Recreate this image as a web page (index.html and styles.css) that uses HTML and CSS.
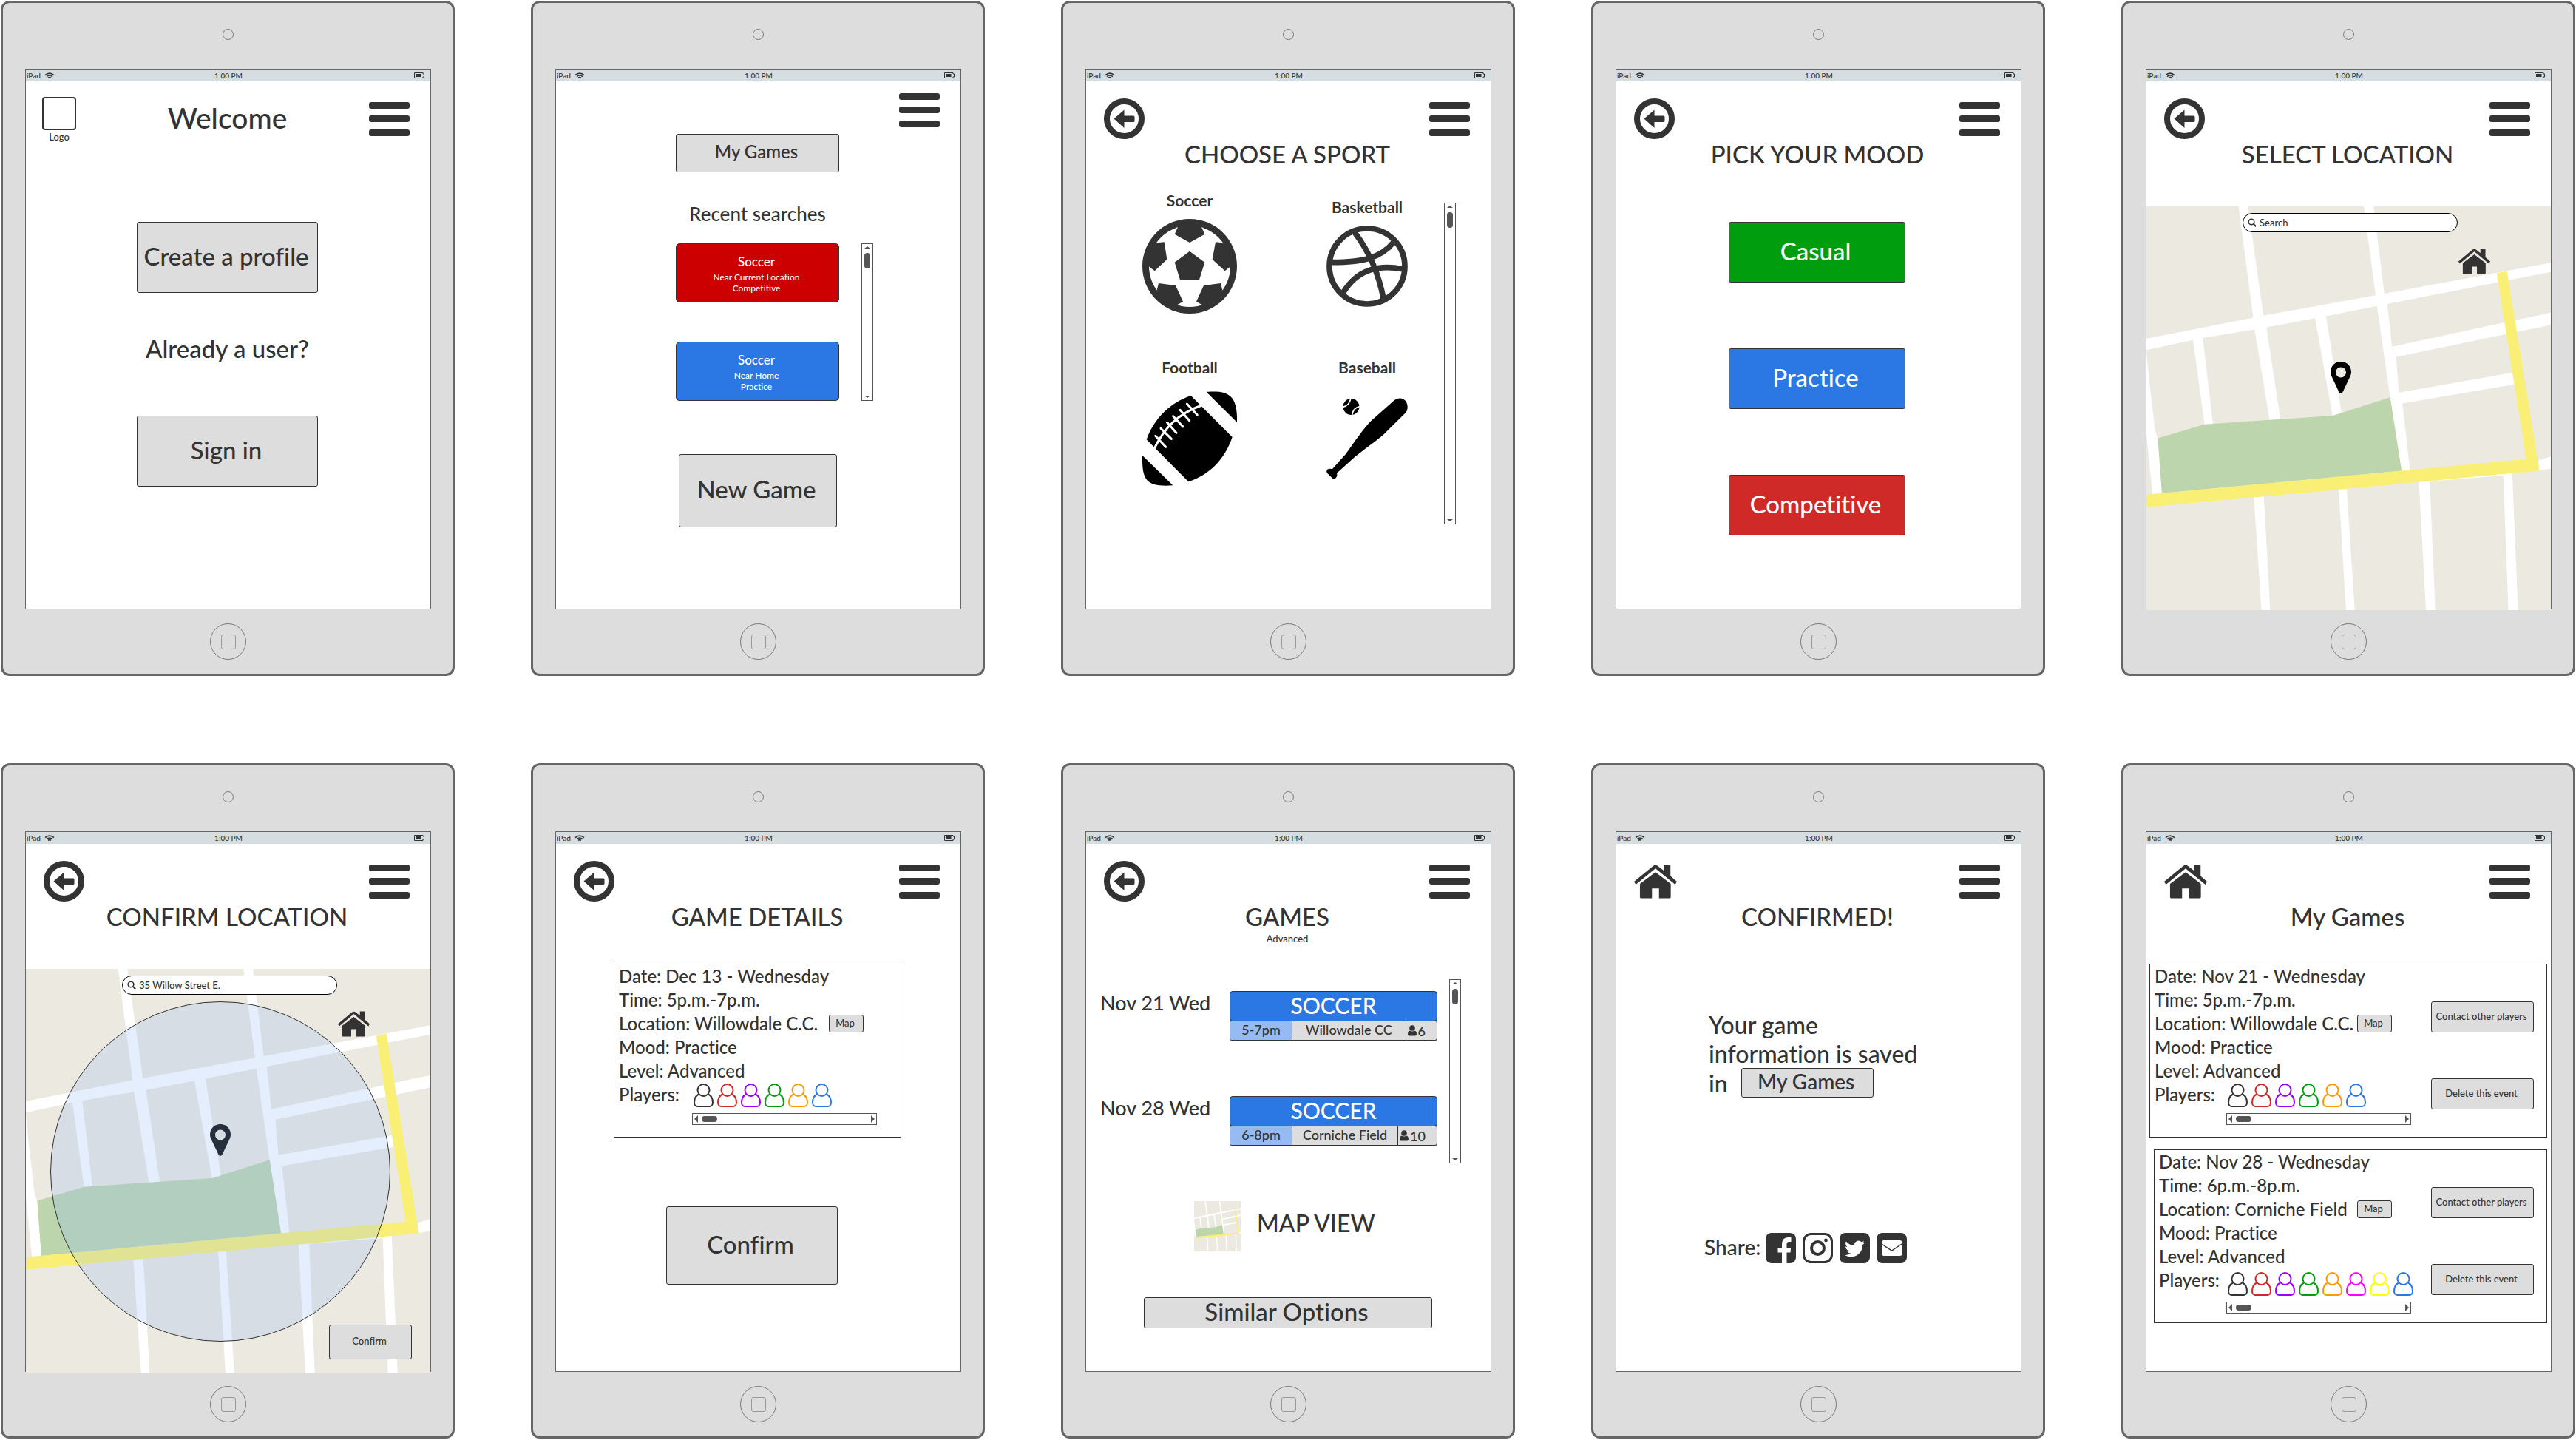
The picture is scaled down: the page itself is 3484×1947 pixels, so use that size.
FILE: index.html
```html
<!DOCTYPE html>
<html lang="en">
<head>
<meta charset="utf-8">
<meta name="viewport" content="width=device-width, initial-scale=1">
<title>Pick-up games: tablet wireframes</title>
<link rel="stylesheet" href="styles.css">
</head>
<body>
<svg class="defs" width="0" height="0" aria-hidden="true">
  <symbol id="wifi" viewBox="0 0 14 9"><path d="M1 3.6Q7-1.4 13 3.6M3 5.6Q7 2.4 11 5.6M5 7.4Q7 5.8 9 7.4" fill="none" stroke="#333" stroke-width="1.6"/></symbol>
  <symbol id="battery" viewBox="0 0 14 8"><path d="M.5.5h11.500v1.500h1.500v4h-1.500v1.500H.5z" fill="none" stroke="#333"/><path d="M2 2h7.500v4H2z" fill="#333"/></symbol>
  <symbol id="menu" viewBox="0 0 55 46"><rect width="55" height="9" rx="3"/><rect y="18" width="55" height="9" rx="3"/><rect y="37" width="55" height="9" rx="3"/></symbol>
  <symbol id="back" viewBox="0 0 55 55"><circle cx="27.500" cy="27.500" r="23.500" fill="none" stroke="currentColor" stroke-width="8"/><path d="M13.500 27.500 27.500 15.500v8H40q1.500 0 1.500 1.500v5.500q0 1.500-1.500 1.500H27.500v8z"/></symbol>
  <symbol id="home" viewBox="149 241 146 80" preserveAspectRatio="none"><path d="M149 281 213 245Q222 240 231 245L250 255V242H273V268L295 281 289 288 222 250 155 288Z"/><path d="M222 259 274 286V317Q274 320 271 320H234V297H210V320H172Q169 320 169 317V286Z"/></symbol>
  <symbol id="person" viewBox="0 0 27 32"><g fill="none" stroke="currentColor" stroke-width="2"><circle cx="13.500" cy="9" r="8"/><path d="M7 14.500C3 16.500 1 21 1 26c0 3 2 5 4.500 5h16c2.500 0 4.500-2 4.500-5 0-5-2-9.500-6-11.500"/></g></symbol>
  <symbol id="user" viewBox="0 0 12 15"><circle cx="6" cy="4" r="3.800"/><path d="M3 7.500Q6 9.500 9 7.500 12 8 12 12.500 12 14.500 10 14.500H2Q0 14.500 0 12.500 0 8 3 7.500Z"/></symbol>
  <symbol id="glass" viewBox="0 0 12 12"><circle cx="5" cy="5" r="3.800" fill="none" stroke="#333" stroke-width="1.600"/><path d="m7.800 7.800 3.400 3.400" stroke="#333" stroke-width="2"/></symbol>
  <symbol id="pin" viewBox="0 0 28 43"><path fill-rule="evenodd" d="M14 0C22 0 28 6 28 14c0 3-1 5-2.200 7.500L16.800 40.500q-2.800 5-5.600 0L2.200 21.500C1 19 0 17 0 14 0 6 6 0 14 0Zm0 7.500a7 7 0 1 0 0 14 7 7 0 0 0 0-14Z"/></symbol>
  <symbol id="soccer" viewBox="75 138 384 384"><circle cx="267" cy="330" r="192"/><circle cx="267" cy="330" r="165" fill="#fff"/><path d="M267 269 328 314 306 385H228L206 314ZM218 173 206 200 267 234 328 200 316 173 300 150H235ZM133 235 164 232 175 302 125 349 103 332 85 280ZM401 235 372 232 359 302 410 349 431 332 450 280ZM134 427 141 399 210 408 240 473 216 487 160 480ZM400 427 393 399 324 408 294 473 318 487 374 480Z"/></symbol>
  <symbol id="basketball" viewBox="822 165 330 330"><g fill="none" stroke="currentColor" stroke-width="23"><circle cx="987" cy="330" r="153"/><path d="M938 195Q1025 310 1054 465M846 314C960 314 1040 300 1095 232M888 440C950 335 1040 325 1132 341"/></g></symbol>
  <symbol id="football" viewBox="75 839 384 384"><path d="M272 857 440 1025C410 1115 345 1180 262 1206L92 1035C125 945 190 885 272 857ZM335 842C425 835 462 855 459 965ZM75 1099C73 1200 90 1228 199 1221Z"/><path d="M122 1074C165 985 220 930 316 896M128 1020 170 1065M150 990 193 1032M175 965 213 1008M200 940 240 983M228 915 266 958M256 890 298 935" fill="none" stroke="#fff" stroke-width="9" stroke-linecap="round"/></symbol>
  <symbol id="baseball" viewBox="825 869 322 322"><path d="M1092 880C1108 866 1130 868 1140 884 1148 897 1148 915 1140 926L1055 1010C1030 1035 985 1062 935 1105L866 1167C870 1180 862 1190 852 1190L828 1167C820 1152 835 1146 848 1151L900 1093C935 1045 975 985 1005 957Z"/><circle cx="923" cy="904" r="32"/><path d="M890 905Q916 900 921 871M957 903Q930 908 926 938" fill="none" stroke="#fff" stroke-width="5"/></symbol>
  <symbol id="facebook" viewBox="0 0 41 41"><rect width="41" height="41" rx="8"/><path fill="#fff" d="M22 41V26.500H16.500V21H22V16C22 9.500 25 6 30.500 6H34.500V12H31.500Q28.500 12 28.500 15V21H34L33.500 26.500H28.500V41Z"/></symbol>
  <symbol id="instagram" viewBox="0 0 41 41"><rect x="1.500" y="1.500" width="38" height="38" rx="10" fill="none" stroke="currentColor" stroke-width="3"/><circle cx="20.500" cy="20.500" r="8.500" fill="none" stroke="currentColor" stroke-width="4"/><circle cx="31.500" cy="10" r="2.400"/></symbol>
  <symbol id="twitter" viewBox="0 0 41 41"><rect width="41" height="41" rx="8"/><path fill="#fff" transform="translate(7 8) scale(1.12)" d="M23.953 4.570a10 10 0 01-2.825.775 4.958 4.958 0 002.163-2.723c-.951.555-2.005.959-3.127 1.184a4.920 4.920 0 00-8.384 4.482C7.690 8.095 4.067 6.130 1.640 3.162a4.822 4.822 0 00-.666 2.475c0 1.710.870 3.213 2.188 4.096a4.904 4.904 0 01-2.228-.616v.060a4.923 4.923 0 003.946 4.827 4.996 4.996 0 01-2.212.085 4.936 4.936 0 004.604 3.417 9.867 9.867 0 01-6.102 2.105c-.390 0-.779-.023-1.170-.067a13.995 13.995 0 007.557 2.209c9.053 0 13.998-7.496 13.998-13.985 0-.210 0-.420-.015-.630A9.935 9.935 0 0024 4.590z"/></symbol>
  <symbol id="email" viewBox="0 0 41 41"><rect width="41" height="41" rx="8"/><rect x="7" y="10" width="27.500" height="21" rx="3" fill="#fff"/><path d="M7 15 20.500 24 34 15" fill="none" stroke="currentColor" stroke-width="1.500"/></symbol>
  <symbol id="streets" viewBox="98 476 1382 930" preserveAspectRatio="none">
    <rect x="98" y="476" width="1382" height="930" fill="#ece9e1"/>
    <g fill="#fff">
      <path d="M98 781 480 730 895 679 1480 606V627L1335 646 1298 651 921 701 711 729 508 755 290 779 98 807Z"/>
      <path d="M413 476H445L498 728 508 754 556 967 519 969 467 757 463 733Z"/>
      <path d="M841 476H874L911 678 921 701 937 799 951 823 961 905 973 930 999 1086H970L931 918 886 707 881 681Z"/>
      <path d="M257 783 290 776 326 980H297ZM673 730 711 725 765 955 735 962Z"/>
      <path d="M937 799 1480 721V749L951 823ZM961 905 1349 859 1355 886 973 930Z"/>
      <path d="M98 812 108 880 127 990 137 1012 151 1138 119 1142 98 1000ZM1436 1061 1480 1052V1080L1441 1084Z"/>
      <path d="M1030 1108 1317 1090V1096L1066 1109Z"/>
      <path d="M465 1144 499 1142 521 1406H491ZM755 1127 782 1125 810 1406H780ZM1029 1109 1066 1107 1085 1406H1053ZM1317 1092 1348 1089 1368 1406H1335Z"/>
    </g>
    <path fill="#bdd5ac" d="M137 1010 297 978 735 958 931 916 970 1085 151 1137Z"/>
    <path fill="#faef75" d="M98 1140 970 1085 1396 1058 1295 630 1330 625 1441 1085 98 1169Z"/>
  </symbol>
</svg>

<main class="board">

  <article class="tablet">
    <div class="tablet__top"><span class="camera"></span></div>
    <section class="screen">
      <div class="status"><span class="status__net">iPad <svg class="i-wifi"><use href="#wifi"/></svg></span><span>1:00 PM</span><svg class="i-battery"><use href="#battery"/></svg></div>
      <header class="hero">
        <div class="logo"><span class="logo__box"></span>Logo</div>
        <h1 class="hero__title">Welcome</h1>
        <button class="icon-btn" aria-label="Menu"><svg class="i-menu"><use href="#menu"/></svg></button>
      </header>
      <div class="signup">
        <button class="btn btn--tall">Create a profile</button>
        <p class="signup__hint">Already a user?</p>
        <button class="btn btn--tall">Sign in</button>
      </div>
    </section>
    <div class="tablet__foot"><span class="home-key"></span></div>
  </article>

  <article class="tablet">
    <div class="tablet__top"><span class="camera"></span></div>
    <section class="screen">
      <div class="status"><span class="status__net">iPad <svg class="i-wifi"><use href="#wifi"/></svg></span><span>1:00 PM</span><svg class="i-battery"><use href="#battery"/></svg></div>
      <header class="top top--high"><button class="icon-btn" aria-label="Menu"><svg class="i-menu"><use href="#menu"/></svg></button></header>
      <div class="searches">
        <button class="btn btn--my">My Games</button>
        <h2 class="searches__title">Recent searches</h2>
        <div class="recent">
          <div class="recent__list">
            <button class="recent__item is-crimson"><b>Soccer</b>Near Current Location<br>Competitive</button>
            <button class="recent__item is-blue"><b>Soccer</b>Near Home<br>Practice</button>
          </div>
          <div class="vscroll"><span class="vscroll__thumb"></span></div>
        </div>
        <button class="btn btn--new">New Game</button>
      </div>
    </section>
    <div class="tablet__foot"><span class="home-key"></span></div>
  </article>

  <article class="tablet">
    <div class="tablet__top"><span class="camera"></span></div>
    <section class="screen">
      <div class="status"><span class="status__net">iPad <svg class="i-wifi"><use href="#wifi"/></svg></span><span>1:00 PM</span><svg class="i-battery"><use href="#battery"/></svg></div>
      <header class="top"><button class="icon-btn" aria-label="Back"><svg class="i-back"><use href="#back"/></svg></button><button class="icon-btn" aria-label="Menu"><svg class="i-menu"><use href="#menu"/></svg></button></header>
      <h1 class="title">CHOOSE A SPORT</h1>
      <div class="sports">
        <div class="sports__grid">
          <button class="sport">Soccer<svg class="i-sport"><use href="#soccer"/></svg></button>
          <button class="sport">Basketball<svg class="i-sport i-sport--small"><use href="#basketball"/></svg></button>
          <button class="sport sport--photo">Football<svg class="i-sport"><use href="#football"/></svg></button>
          <button class="sport sport--photo">Baseball<svg class="i-sport i-sport--small"><use href="#baseball"/></svg></button>
        </div>
        <div class="vscroll"><span class="vscroll__thumb"></span></div>
      </div>
    </section>
    <div class="tablet__foot"><span class="home-key"></span></div>
  </article>

  <article class="tablet">
    <div class="tablet__top"><span class="camera"></span></div>
    <section class="screen">
      <div class="status"><span class="status__net">iPad <svg class="i-wifi"><use href="#wifi"/></svg></span><span>1:00 PM</span><svg class="i-battery"><use href="#battery"/></svg></div>
      <header class="top"><button class="icon-btn" aria-label="Back"><svg class="i-back"><use href="#back"/></svg></button><button class="icon-btn" aria-label="Menu"><svg class="i-menu"><use href="#menu"/></svg></button></header>
      <h1 class="title">PICK YOUR MOOD</h1>
      <div class="moods">
        <button class="btn btn--mood is-green">Casual</button>
        <button class="btn btn--mood is-blue">Practice</button>
        <button class="btn btn--mood is-red">Competitive</button>
      </div>
    </section>
    <div class="tablet__foot"><span class="home-key"></span></div>
  </article>

  <article class="tablet">
    <div class="tablet__top"><span class="camera"></span></div>
    <section class="screen">
      <div class="status"><span class="status__net">iPad <svg class="i-wifi"><use href="#wifi"/></svg></span><span>1:00 PM</span><svg class="i-battery"><use href="#battery"/></svg></div>
      <header class="top"><button class="icon-btn" aria-label="Back"><svg class="i-back"><use href="#back"/></svg></button><button class="icon-btn" aria-label="Menu"><svg class="i-menu"><use href="#menu"/></svg></button></header>
      <h1 class="title">SELECT LOCATION</h1>
      <div class="map">
        <svg class="map__streets"><use href="#streets"/></svg>
        <label class="map__search"><svg class="i-glass"><use href="#glass"/></svg><input type="text" value="Search" aria-label="Search location"></label>
        <svg class="map__home"><use href="#home"/></svg>
        <svg class="map__pin"><use href="#pin"/></svg>
      </div>
    </section>
    <div class="tablet__foot"><span class="home-key"></span></div>
  </article>

  <article class="tablet">
    <div class="tablet__top"><span class="camera"></span></div>
    <section class="screen">
      <div class="status"><span class="status__net">iPad <svg class="i-wifi"><use href="#wifi"/></svg></span><span>1:00 PM</span><svg class="i-battery"><use href="#battery"/></svg></div>
      <header class="top"><button class="icon-btn" aria-label="Back"><svg class="i-back"><use href="#back"/></svg></button><button class="icon-btn" aria-label="Menu"><svg class="i-menu"><use href="#menu"/></svg></button></header>
      <h1 class="title">CONFIRM LOCATION</h1>
      <div class="map">
        <svg class="map__streets"><use href="#streets"/></svg>
        <label class="map__search"><svg class="i-glass"><use href="#glass"/></svg><input type="text" value="35 Willow Street E." aria-label="Search location"></label>
        <svg class="map__home"><use href="#home"/></svg>
        <svg class="map__pin"><use href="#pin"/></svg>
        <span class="map__radius"></span>
        <button class="btn btn--small map__confirm">Confirm</button>
      </div>
    </section>
    <div class="tablet__foot"><span class="home-key"></span></div>
  </article>

  <article class="tablet">
    <div class="tablet__top"><span class="camera"></span></div>
    <section class="screen">
      <div class="status"><span class="status__net">iPad <svg class="i-wifi"><use href="#wifi"/></svg></span><span>1:00 PM</span><svg class="i-battery"><use href="#battery"/></svg></div>
      <header class="top"><button class="icon-btn" aria-label="Back"><svg class="i-back"><use href="#back"/></svg></button><button class="icon-btn" aria-label="Menu"><svg class="i-menu"><use href="#menu"/></svg></button></header>
      <h1 class="title">GAME DETAILS</h1>
      <div class="details">
        <div class="card card--single">
          <div class="card__facts">
            <p>Date: Dec 13 - Wednesday</p>
            <p>Time: 5p.m.-7p.m.</p>
            <p class="place"><span class="place__name">Location: Willowdale C.C.</span><button class="btn btn--map">Map</button></p>
            <p>Mood: Practice</p>
            <p>Level: Advanced</p>
            <div class="players"><span class="players__label">Players:</span>
              <div>
                <div class="players__row"><svg class="p-black"><use href="#person"/></svg><svg class="p-red"><use href="#person"/></svg><svg class="p-purple"><use href="#person"/></svg><svg class="p-green"><use href="#person"/></svg><svg class="p-orange"><use href="#person"/></svg><svg class="p-blue"><use href="#person"/></svg></div>
                <div class="hscroll"><span class="hscroll__thumb"></span></div>
              </div>
            </div>
          </div>
        </div>
        <div class="details__action"><button class="btn btn--confirm">Confirm</button></div>
      </div>
    </section>
    <div class="tablet__foot"><span class="home-key"></span></div>
  </article>

  <article class="tablet">
    <div class="tablet__top"><span class="camera"></span></div>
    <section class="screen">
      <div class="status"><span class="status__net">iPad <svg class="i-wifi"><use href="#wifi"/></svg></span><span>1:00 PM</span><svg class="i-battery"><use href="#battery"/></svg></div>
      <header class="top"><button class="icon-btn" aria-label="Back"><svg class="i-back"><use href="#back"/></svg></button><button class="icon-btn" aria-label="Menu"><svg class="i-menu"><use href="#menu"/></svg></button></header>
      <h1 class="title">GAMES</h1>
      <p class="subtitle">Advanced</p>
      <div class="games">
        <div class="games__list">
          <div class="game"><span class="game__day">Nov 21 Wed</span>
            <div class="event"><a class="event__sport" href="#">SOCCER</a>
              <div class="event__meta"><span class="event__time">5-7pm</span><span class="event__place">Willowdale CC</span><span class="event__count"><svg class="i-user"><use href="#user"/></svg>6</span></div></div>
          </div>
          <div class="game"><span class="game__day">Nov 28 Wed</span>
            <div class="event"><a class="event__sport" href="#">SOCCER</a>
              <div class="event__meta"><span class="event__time">6-8pm</span><span class="event__place">Corniche Field</span><span class="event__count"><svg class="i-user"><use href="#user"/></svg>10</span></div></div>
          </div>
        </div>
        <div class="vscroll"><span class="vscroll__thumb"></span></div>
      </div>
      <a class="map-link" href="#"><svg class="map-link__thumb"><use href="#streets"/></svg>MAP VIEW</a>
      <div class="similar"><button class="btn btn--wide">Similar Options</button></div>
    </section>
    <div class="tablet__foot"><span class="home-key"></span></div>
  </article>

  <article class="tablet">
    <div class="tablet__top"><span class="camera"></span></div>
    <section class="screen">
      <div class="status"><span class="status__net">iPad <svg class="i-wifi"><use href="#wifi"/></svg></span><span>1:00 PM</span><svg class="i-battery"><use href="#battery"/></svg></div>
      <header class="top"><button class="icon-btn" aria-label="Home"><svg class="i-home"><use href="#home"/></svg></button><button class="icon-btn" aria-label="Menu"><svg class="i-menu"><use href="#menu"/></svg></button></header>
      <h1 class="title">CONFIRMED!</h1>
      <div class="saved">
        <p>Your game<br>information is saved</p>
        <p class="saved__last">in <button class="btn btn--inline">My Games</button></p>
      </div>
      <div class="share"><span class="share__label">Share:</span>
        <button class="icon-btn" aria-label="Facebook"><svg class="i-social"><use href="#facebook"/></svg></button>
        <button class="icon-btn" aria-label="Instagram"><svg class="i-social"><use href="#instagram"/></svg></button>
        <button class="icon-btn" aria-label="Twitter"><svg class="i-social"><use href="#twitter"/></svg></button>
        <button class="icon-btn" aria-label="Email"><svg class="i-social"><use href="#email"/></svg></button>
      </div>
    </section>
    <div class="tablet__foot"><span class="home-key"></span></div>
  </article>

  <article class="tablet">
    <div class="tablet__top"><span class="camera"></span></div>
    <section class="screen">
      <div class="status"><span class="status__net">iPad <svg class="i-wifi"><use href="#wifi"/></svg></span><span>1:00 PM</span><svg class="i-battery"><use href="#battery"/></svg></div>
      <header class="top"><button class="icon-btn" aria-label="Home"><svg class="i-home"><use href="#home"/></svg></button><button class="icon-btn" aria-label="Menu"><svg class="i-menu"><use href="#menu"/></svg></button></header>
      <h1 class="title">My Games</h1>
      <div class="my-games">
        <div class="card card--first">
          <div class="card__facts">
            <p>Date: Nov 21 - Wednesday</p>
            <p>Time: 5p.m.-7p.m.</p>
            <p class="place"><span class="place__name">Location: Willowdale C.C.</span><button class="btn btn--map">Map</button></p>
            <p>Mood: Practice</p>
            <p>Level: Advanced</p>
            <div class="players"><span class="players__label">Players:</span>
              <div>
                <div class="players__row"><svg class="p-black"><use href="#person"/></svg><svg class="p-red"><use href="#person"/></svg><svg class="p-purple"><use href="#person"/></svg><svg class="p-green"><use href="#person"/></svg><svg class="p-orange"><use href="#person"/></svg><svg class="p-blue"><use href="#person"/></svg></div>
                <div class="hscroll"><span class="hscroll__thumb"></span></div>
              </div>
            </div>
          </div>
          <div class="card__actions"><button class="btn btn--small">Contact other players</button><button class="btn btn--small">Delete this event</button></div>
        </div>
        <div class="card card--second">
          <div class="card__facts">
            <p>Date: Nov 28 - Wednesday</p>
            <p>Time: 6p.m.-8p.m.</p>
            <p class="place"><span class="place__name">Location: Corniche Field</span><button class="btn btn--map">Map</button></p>
            <p>Mood: Practice</p>
            <p>Level: Advanced</p>
            <div class="players"><span class="players__label">Players:</span>
              <div>
                <div class="players__row"><svg class="p-black"><use href="#person"/></svg><svg class="p-red"><use href="#person"/></svg><svg class="p-purple"><use href="#person"/></svg><svg class="p-green"><use href="#person"/></svg><svg class="p-orange"><use href="#person"/></svg><svg class="p-pink"><use href="#person"/></svg><svg class="p-yellow"><use href="#person"/></svg><svg class="p-blue"><use href="#person"/></svg></div>
                <div class="hscroll"><span class="hscroll__thumb"></span></div>
              </div>
            </div>
          </div>
          <div class="card__actions"><button class="btn btn--small">Contact other players</button><button class="btn btn--small">Delete this event</button></div>
        </div>
      </div>
    </section>
    <div class="tablet__foot"><span class="home-key"></span></div>
  </article>

</main>
</body>
</html>
```
FILE: styles.css
```css
:root {
  --ink: #333;
  --grey: #ddd;
  --blue: #2b78e4;
}
* { box-sizing: border-box; }
body {
  margin: 0;
  background: #fff;
  color: var(--ink);
  font-family: "Lato", "Open Sans", sans-serif;
  font-weight: 500;
  font-variant-ligatures: none;
}
h1, h2, p { margin: 0; font-weight: inherit; }
button, input { font: inherit; color: inherit; }
a { color: inherit; text-decoration: none; }
svg { display: block; flex: none; fill: currentColor; }
.defs { position: absolute; }

/* Board and device frames */
.board {
  display: grid;
  grid-template-columns: repeat(5, minmax(0, 1fr));
  gap: 118px 103px;
  padding: 1px;
}
.tablet {
  display: flex;
  flex-direction: column;
  padding: 0 29px 0 30px;
  border: 3px solid #666;
  border-radius: 12px;
  background: var(--grey);
}
.tablet__top { display: flex; justify-content: center; height: 89px; padding-top: 35px; }
.tablet__foot { display: flex; align-items: center; justify-content: center; height: 87px; }
.camera { width: 15px; height: 15px; border: 1px solid #777; border-radius: 50%; }
.home-key {
  display: grid;
  place-items: center;
  width: 49px;
  height: 49px;
  border: 1px solid #777;
  border-radius: 50%;
}
.home-key::after { content: ""; width: 18px; height: 18px; border: 1px solid #999; border-radius: 3px; }
.screen { flex: 1; min-height: 731px; border: 1px solid #666; background: #fff; }
.status {
  display: grid;
  grid-template-columns: 1fr auto 1fr;
  align-items: center;
  height: 16px;
  padding: 0 8px 0 1px;
  background: #d6dde0;
  font-size: 10px;
  line-height: 14px;
}
.status > :nth-child(2) { padding-left: 8px; }
.status__net { display: flex; align-items: center; gap: 5px; }
.i-wifi { width: 14px; height: 9px; }
.i-battery { width: 14px; height: 8px; justify-self: end; }

/* Headers */
.icon-btn { display: block; padding: 0; border: 0; background: none; color: var(--ink); }
.i-menu { width: 55px; height: 46px; }
.i-back { width: 55px; height: 55px; }
.i-home { width: 58px; height: 46px; }
.top { display: flex; align-items: center; justify-content: space-between; height: 78px; padding: 23px 28px 0 24px; }
.top--high { height: 62px; padding-top: 16px; justify-content: flex-end; }
.title { padding-right: 3px; font-size: 33px; line-height: 40px; text-align: center; }
.subtitle { padding-right: 3px; font-size: 13px; line-height: 20px; text-align: center; }
.hero { display: grid; grid-template-columns: 1fr auto 1fr; padding: 21px 28px 0 22px; }
.hero__title { padding-left: 4px; font-size: 39px; line-height: 56px; }
.hero .icon-btn { justify-self: end; height: 60px; }
.logo { width: 46px; font-size: 13px; line-height: 18px; text-align: center; }
.logo__box { display: block; height: 45px; border: 2px solid var(--ink); border-radius: 4px; }

/* Buttons */
.btn {
  padding: 0 3px 4px 0;
  border: 1px solid var(--ink);
  border-radius: 3px;
  background: var(--grey);
  font-size: 33px;
  line-height: 1;
  white-space: nowrap;
}
.btn--tall { width: 245px; height: 96px; }
.btn--my { width: 221px; height: 52px; font-size: 24px; }
.btn--new { width: 214px; height: 99px; }
.btn--mood { width: 239px; height: 82px; color: #fff; }
.btn--confirm { width: 232px; height: 106px; }
.btn--wide { width: 390px; height: 42px; }
.btn--inline { width: 179px; height: 40px; font-size: 28px; }
.btn--small { width: 139px; height: 42px; padding-bottom: 2px; font-size: 13px; }
.btn--map { width: 47px; height: 24px; padding-bottom: 2px; font-size: 13px; }
.is-green { background: #009e0f; }
.is-blue { background: var(--blue); }
.is-red { background: #cf2a27; }
.is-crimson { background: #c00; }

/* Sign up */
.signup { display: flex; flex-direction: column; align-items: center; padding: 106px 2px 0 0; }
.signup__hint { margin: 55px 0 71px; font-size: 33px; line-height: 40px; }

/* Recent searches */
.searches { display: flex; flex-direction: column; align-items: center; padding: 9px 2px 0 0; }
.searches__title { margin: 40px 0 24px; font-size: 26px; line-height: 32px; }
.recent { display: grid; grid-template-columns: 1fr 221px 1fr; column-gap: 30px; width: 100%; margin-bottom: 72px; }
.recent__list { grid-column: 2; display: grid; gap: 53px; }
.recent__item {
  height: 80px;
  padding: 0 3px 0 0;
  border: 1px solid var(--ink);
  border-radius: 5px;
  color: #fff;
  font-size: 12px;
  line-height: 15px;
}
.recent__item b { display: block; font-size: 17px; font-weight: 500; line-height: 26px; }

/* Scroll bars */
.vscroll {
  display: flex;
  flex-direction: column;
  align-items: center;
  width: 16px;
  padding: 3px 0;
  border: 1px solid #555;
  background: #fff;
}
.vscroll::before, .vscroll::after { content: ""; border: 4px solid transparent; }
.vscroll::before { border-top: 0; border-bottom: 3px solid #555; }
.vscroll::after { margin-top: auto; border-bottom: 0; border-top: 3px solid #555; }
.vscroll__thumb { width: 8px; height: 21px; margin-top: 6px; border-radius: 4px; background: #555; }
.hscroll {
  display: flex;
  align-items: center;
  width: 250px;
  height: 16px;
  padding: 0 2px;
  border: 1px solid #555;
  background: #fff;
}
.hscroll::before, .hscroll::after { content: ""; border: 5px solid transparent; }
.hscroll::before { border-left: 0; border-right-color: #555; }
.hscroll::after { margin-left: auto; border-right: 0; border-left-color: #555; }
.hscroll__thumb { width: 21px; height: 8px; margin-left: 5px; border-radius: 4px; background: #555; }

/* Sports */
.sports { display: flex; justify-content: space-between; padding: 31px 47px 0 76px; }
.sports__grid { display: grid; grid-template-columns: 128px 110px; gap: 61px 121px; align-items: center; align-content: start; }
.sports .vscroll { height: 435px; margin-top: 15px; }
.sport {
  display: flex;
  flex-direction: column;
  align-items: center;
  gap: 13px;
  padding: 0;
  border: 0;
  background: none;
  font-size: 21px;
  font-weight: 700;
  line-height: 24px;
}
.sport svg { color: var(--ink); }
.i-sport { width: 128px; height: 128px; }
.i-sport--small { width: 110px; height: 110px; }
.sport--photo { gap: 20px; }
.sport--photo svg { color: #000; }
.sport--photo .i-sport--small { height: 128px; }

/* Moods */
.moods { display: flex; flex-direction: column; align-items: center; gap: 89px; padding: 72px 5px 0 0; }

/* Maps */
.map { position: relative; height: 546px; margin: 51px 0 -2px; }
.map__streets { width: 100%; height: 100%; }
.map__search {
  position: absolute;
  top: 9px;
  left: 130px;
  display: flex;
  align-items: center;
  gap: 4px;
  width: 291px;
  height: 26px;
  padding: 0 6px;
  border: 1px solid #000;
  border-radius: 13px;
  background: #fff;
}
.map__search input { flex: 1; min-width: 0; padding: 0; border: 0; outline: 0; background: none; font-size: 13px; line-height: 20px; }
.i-glass { width: 12px; height: 12px; }
.map__home { position: absolute; top: 57px; left: 422px; width: 43px; height: 35px; }
.map__pin { position: absolute; top: 210px; left: 249px; width: 28px; height: 43px; color: #000; }
.map__radius {
  position: absolute;
  top: 44px;
  left: 33px;
  width: 460px;
  height: 460px;
  border: 1px solid var(--ink);
  border-radius: 50%;
  background: rgba(149, 187, 242, .25);
}
.map__confirm { position: absolute; top: 481px; left: 410px; width: 112px; height: 47px; }

/* Game cards */
.card { display: flex; justify-content: space-between; min-height: 235px; padding-left: 6px; border: 1px solid var(--ink); font-size: 24px; line-height: 32px; }
.card--single { --place: 284px; --label: 99px; width: 389px; }
.card--first { --place: 274px; --label: 97px; }
.card--second { --place: 268px; --label: 91px; margin-left: 6px; }
.card__facts { white-space: nowrap; }
.place { display: flex; align-items: center; }
.place__name { min-width: var(--place); }
.players { display: flex; }
.players__label { min-width: var(--label); }
.players__row { display: flex; gap: 5px; padding: 1px 0 8px 2px; }
.players__row svg { width: 27px; height: 32px; }
.card--second .players__row { padding-top: 5px; }
.card__actions { display: flex; flex-direction: column; gap: 62px; padding: 50px 17px 0 0; }
.p-black { color: var(--ink); }
.p-red { color: #cf2a27; }
.p-purple { color: #90f; }
.p-green { color: #009e0f; }
.p-orange { color: #f90; }
.p-blue { color: var(--blue); }
.p-pink { color: #f0f; }
.p-yellow { color: #ff0; }
.details { display: flex; flex-direction: column; align-items: center; padding: 44px 2px 0 0; }
.details__action { padding: 93px 16px 0 0; }
.my-games { display: grid; gap: 16px; padding: 44px 5px 0 4px; }

/* Games list */
.games { display: flex; gap: 16px; margin-top: 45px; padding: 0 40px 0 19px; }
.games .vscroll { height: 249px; }
.games__list { flex: 1; display: grid; gap: 75px; align-content: start; padding-top: 16px; }
.game { display: grid; grid-template-columns: 1fr 281px; align-items: start; }
.game__day { font-size: 27px; line-height: 32px; white-space: nowrap; }
.event__sport {
  display: block;
  height: 41px;
  border: 1px solid var(--ink);
  border-radius: 4px;
  background: var(--blue);
  color: #fff;
  font-size: 30px;
  line-height: 36px;
  text-align: center;
}
.event__meta {
  display: flex;
  height: 26px;
  border: 1px solid var(--ink);
  border-top: 0;
  border-radius: 3px;
  overflow: hidden;
  background: var(--grey);
  font-size: 18px;
  line-height: 22px;
  text-align: center;
}
.event__time { width: 84px; border-right: 1px solid var(--ink); background: #95bbf2; }
.event__place { flex: 1; }
.event__count { display: flex; align-items: center; gap: 2px; padding: 0 15px 0 2px; border-left: 1px solid var(--ink); }
.i-user { width: 12px; height: 15px; }
.map-link { display: flex; gap: 22px; margin-top: 51px; padding-left: 146px; font-size: 32px; line-height: 60px; }
.map-link__thumb { width: 63px; height: 68px; }
.similar { display: flex; justify-content: center; padding: 62px 2px 0 0; }

/* Confirmation */
.saved { margin: 107px 0 0 125px; font-size: 32px; line-height: 39px; }
.saved__last { display: flex; align-items: center; gap: 18px; }
.share { display: flex; align-items: center; gap: 9px; margin: 183px 0 0 119px; font-size: 28px; line-height: 36px; }
.share__label { width: 74px; padding-bottom: 4px; white-space: nowrap; }
.i-social { width: 41px; height: 41px; }
```
